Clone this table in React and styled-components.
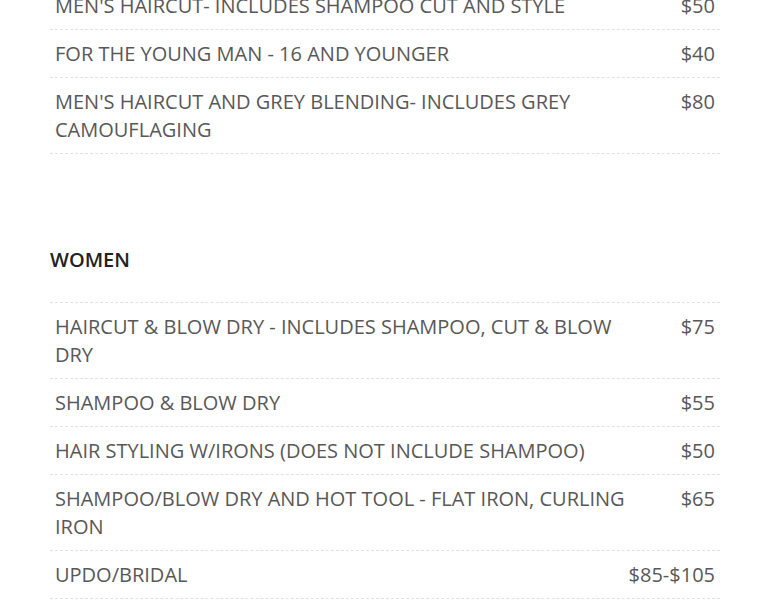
import styled, { createGlobalStyle } from 'styled-components'

const GlobalStyle = createGlobalStyle`
    html, body {
        margin: 0;
        padding: 0;
        background: #fff;
    }
    body {
        font-family: "Open Sans", "Liberation Sans", sans-serif;
        overflow: hidden;
    }
`

const Page = styled.div`
    width: 670px;
    margin: -19px auto 0;
    padding: 0 50px;
`

const Section = styled.section`
    & + & {
        margin-top: 92px;
    }
`

const Heading = styled.h2`
    margin: 0 0 28px;
    font-size: 20px;
    line-height: 28px;
    font-weight: 600;
    color: #222;
`

const List = styled.ul`
    margin: 0;
    padding: 0;
    list-style: none;
    border-top: 1px dashed #e2e2e2;
`

const Item = styled.li`
    display: flex;
    justify-content: space-between;
    align-items: flex-start;
    padding: 10px 5px 9px;
    border-bottom: 1px dashed #e2e2e2;
    font-size: 20px;
    line-height: 28px;
    color: #585858;
    text-transform: uppercase;
`

const Name = styled.span`
    flex: 1;
    max-width: 590px;
`

const Price = styled.span`
    margin-left: 20px;
    white-space: nowrap;
`

const sections = [
    {
        title: null,
        items: [
            { name: "Men's haircut- includes shampoo cut and style", price: '$50' },
            { name: 'For the young man - 16 and younger', price: '$40' },
            { name: "Men's haircut and grey blending- includes grey camouflaging", price: '$80' }
        ]
    },
    {
        title: 'Women',
        items: [
            { name: 'Haircut & blow dry - includes shampoo, cut & blow dry', price: '$75' },
            { name: 'Shampoo & blow dry', price: '$55' },
            { name: 'Hair styling w/irons (does not include shampoo)', price: '$50' },
            { name: 'Shampoo/blow dry and hot tool - flat iron, curling iron', price: '$65' },
            { name: 'Updo/bridal', price: '$85-$105' }
        ]
    }
]

export default function App() {
    return (
        <Page>
            <GlobalStyle />
            {sections.map((section, i) => (
                <Section key={i}>
                    {section.title ? <Heading>{section.title.toUpperCase()}</Heading> : ''}
                    <List>
                        {section.items.map(item => (
                            <Item key={item.name}>
                                <Name>{item.name}</Name>
                                <Price>{item.price}</Price>
                            </Item>
                        ))}
                    </List>
                </Section>
            ))}
        </Page>
    )
}
